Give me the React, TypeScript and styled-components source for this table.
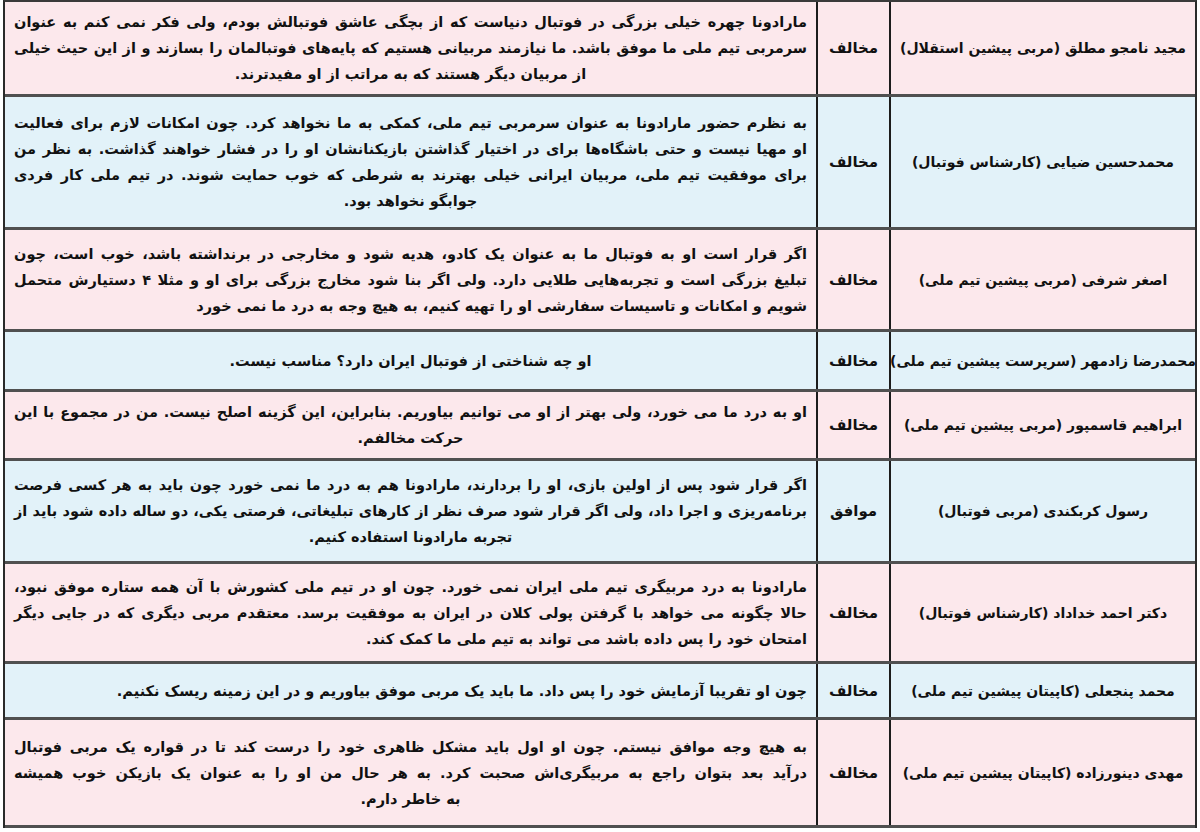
import React from "react";
import styled, { createGlobalStyle } from "styled-components";

const Global = createGlobalStyle`
  html, body { margin: 0; padding: 0; background: #ffffff; }
  body { font-family: "DejaVu Sans", "Noto Sans", sans-serif; }
`;

type Tone = "pink" | "blue";
type Align = "center" | "right";

interface RowData {
  name: string;
  stance: string;
  lines: string[];
  last: Align;
  h: number;
}

const rows: RowData[] = [
  {
    name: "مجید نامجو مطلق (مربی پیشین استقلال)",
    stance: "مخالف",
    lines: [
      "مارادونا چهره خیلی بزرگی در فوتبال دنیاست که از بچگی عاشق فوتبالش بودم، ولی فکر نمی کنم به عنوان",
      "سرمربی تیم ملی ما موفق باشد. ما نیازمند مربیانی هستیم که پایه‌های فوتبالمان را بسازند و از این حیث خیلی",
      "از مربیان دیگر هستند که به مراتب از او مفیدترند.",
    ],
    last: "center",
    h: 95,
  },
  {
    name: "محمدحسین ضیایی (کارشناس فوتبال)",
    stance: "مخالف",
    lines: [
      "به نظرم حضور مارادونا به عنوان سرمربی تیم ملی، کمکی به ما نخواهد کرد. چون امکانات لازم برای فعالیت",
      "او مهیا نیست و حتی باشگاه‌ها برای در اختیار گذاشتن بازیکنانشان او را در فشار خواهند گذاشت. به نظر من",
      "برای موفقیت تیم ملی، مربیان ایرانی خیلی بهترند به شرطی که خوب حمایت شوند. در تیم ملی کار فردی",
      "جوابگو نخواهد بود.",
    ],
    last: "center",
    h: 133,
  },
  {
    name: "اصغر شرفی (مربی پیشین تیم ملی)",
    stance: "مخالف",
    lines: [
      "اگر قرار است او به فوتبال ما به عنوان یک کادو، هدیه شود و مخارجی در برنداشته باشد، خوب است، چون",
      "تبلیغ بزرگی است و تجربه‌هایی طلایی دارد. ولی اگر بنا شود مخارج بزرگی برای او و مثلا ۴ دستیارش متحمل",
      "شویم و امکانات و تاسیسات سفارشی او را تهیه کنیم، به هیچ وجه به درد ما نمی خورد",
    ],
    last: "right",
    h: 102,
  },
  {
    name: "محمدرضا زادمهر (سرپرست پیشین تیم ملی)",
    stance: "مخالف",
    lines: ["او چه شناختی از فوتبال ایران دارد؟ مناسب نیست."],
    last: "center",
    h: 60,
  },
  {
    name: "ابراهیم قاسمپور (مربی پیشین تیم ملی)",
    stance: "مخالف",
    lines: [
      "او به درد ما می خورد، ولی بهتر از او می توانیم بیاوریم. بنابراین، این گزینه اصلح نیست. من در مجموع با این",
      "حرکت مخالفم.",
    ],
    last: "center",
    h: 69,
  },
  {
    name: "رسول کربکندی (مربی فوتبال)",
    stance: "موافق",
    lines: [
      "اگر قرار شود پس از اولین بازی، او را بردارند، مارادونا هم به درد ما نمی خورد چون باید به هر کسی فرصت",
      "برنامه‌ریزی و اجرا داد، ولی اگر قرار شود صرف نظر از کارهای تبلیغاتی، فرصتی یکی، دو ساله داده شود باید از",
      "تجربه مارادونا استفاده کنیم.",
    ],
    last: "center",
    h: 103,
  },
  {
    name: "دکتر احمد خداداد (کارشناس فوتبال)",
    stance: "مخالف",
    lines: [
      "مارادونا به درد مربیگری تیم ملی ایران نمی خورد. چون او در تیم ملی کشورش با آن همه ستاره موفق نبود،",
      "حالا چگونه می خواهد با گرفتن پولی کلان در ایران به موفقیت برسد. معتقدم مربی دیگری که در جایی دیگر",
      "امتحان خود را پس داده باشد می تواند به تیم ملی ما کمک کند.",
    ],
    last: "right",
    h: 100,
  },
  {
    name: "محمد پنجعلی (کاپیتان پیشین تیم ملی)",
    stance: "مخالف",
    lines: [
      "چون او تقریبا آزمایش خود را پس داد. ما باید یک مربی موفق بیاوریم و در این زمینه ریسک نکنیم.",
    ],
    last: "right",
    h: 56,
  },
  {
    name: "مهدی دینورزاده (کاپیتان پیشین تیم ملی)",
    stance: "مخالف",
    lines: [
      "به هیچ وجه موافق نیستم. چون او اول باید مشکل ظاهری خود را درست کند تا در قواره یک مربی فوتبال",
      "درآید بعد بتوان راجع به مربیگری‌اش صحبت کرد. به هر حال من او را به عنوان یک بازیکن خوب همیشه",
      "به خاطر دارم.",
    ],
    last: "center",
    h: 108,
  },
];

const Table = styled.div`
  direction: rtl;
  width: 1194px;
  margin: 0 0 0 3px;
  border-top: 2px solid #3a3a3a;
  border-left: 2px solid #2a2a2a;
  border-right: 2px solid #2a2a2a;
  box-sizing: border-box;
`;

const Row = styled.div<{ $tone: Tone; $h: number }>`
  display: grid;
  grid-template-columns: 306px 73px 1fr;
  height: ${(p) => p.$h}px;
  box-sizing: border-box;
  border-bottom: 3px solid #505050;
  background: ${(p) => (p.$tone === "pink" ? "#fce8ec" : "#e2f2f9")};
  color: #111111;
  font-weight: 700;
  line-height: 26px;
`;

const NameCell = styled.div`
  display: flex;
  align-items: center;
  justify-content: center;
  border-left: 2px solid #1c1c1c;
  padding: 0 2px;
  white-space: nowrap;
  overflow: hidden;
  font-size: 14px;
`;

const StanceCell = styled.div`
  display: flex;
  align-items: center;
  justify-content: center;
  border-left: 2px solid #1c1c1c;
  font-size: 15px;
`;

const TextCell = styled.div`
  display: flex;
  flex-direction: column;
  justify-content: center;
  padding: 0 9px;
  overflow: hidden;
  font-size: 14.5px;
`;

const Line = styled.div<{ $align: Align | "justify" }>`
  text-align: ${(p) => p.$align};
  text-align-last: ${(p) => p.$align};
  white-space: nowrap;
`;

export default function App() {
  return (
    <>
      <Global />
      <Table>
        {rows.map((r, i) => (
          <Row key={i} $tone={i % 2 === 0 ? "pink" : "blue"} $h={r.h}>
            <NameCell>{r.name}</NameCell>
            <StanceCell>{r.stance}</StanceCell>
            <TextCell>
              {r.lines.map((l, j) => (
                <Line
                  key={j}
                  $align={j === r.lines.length - 1 ? r.last : "justify"}
                >
                  {l}
                </Line>
              ))}
            </TextCell>
          </Row>
        ))}
      </Table>
    </>
  );
}
